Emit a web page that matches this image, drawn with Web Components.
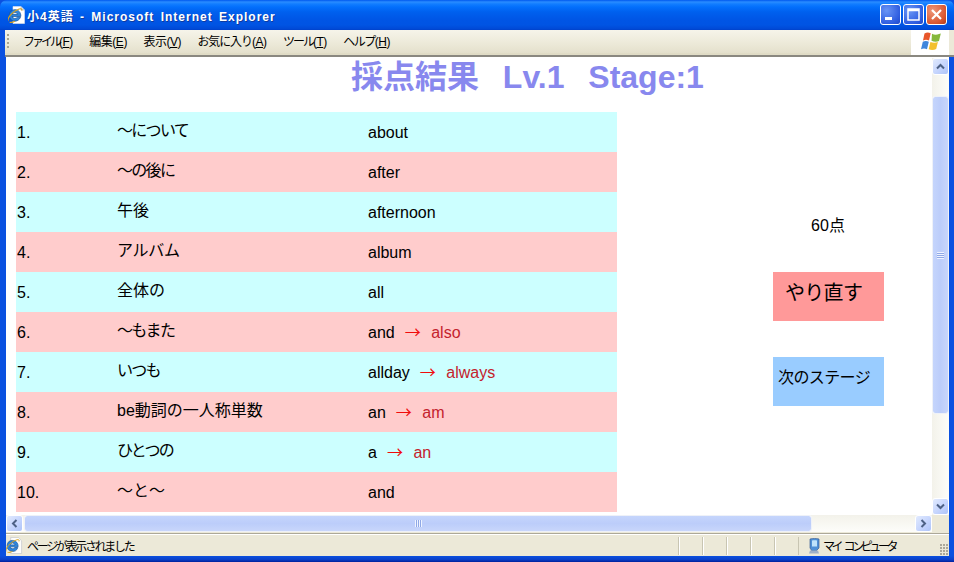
<!DOCTYPE html>
<html lang="ja"><head><meta charset="utf-8"><title>小4英語</title>
<style>
html,body{margin:0;height:100%;overflow:hidden;background:#0054e3}
body{font-family:"Liberation Sans","Noto Sans CJK JP",sans-serif}
.k{letter-spacing:-3px}
.k2{letter-spacing:-1.1px}
.k3{letter-spacing:-2px}
.k4{letter-spacing:-1.5px}
.k1{letter-spacing:-1.7px}
.ks{letter-spacing:-.6px}
.kt{letter-spacing:-2.3px}
.kz{letter-spacing:-3.4px}
</style></head><body>
<xp-window>
  <xp-titlebar slot="title">小4英語 - Microsoft Internet Explorer</xp-titlebar>
  <xp-menubar slot="menu">
    <xp-menu><span class="k">ファイル</span>(<u>F</u>)</xp-menu>
    <xp-menu>編集(<u>E</u>)</xp-menu>
    <xp-menu>表示(<u>V</u>)</xp-menu>
    <xp-menu><span class="k2">お気に入り</span>(<u>A</u>)</xp-menu>
    <xp-menu><span class="k3">ツール</span>(<u>T</u>)</xp-menu>
    <xp-menu><span class="k4">ヘルプ</span>(<u>H</u>)</xp-menu>
  </xp-menubar>
  <result-page slot="page">
    <span slot="heading">採点結果&nbsp;&nbsp;Lv.1&nbsp;&nbsp;Stage:1</span>
    <score-row slot="rows" n="1." tone="cyan"><span slot="jp" class="k1">〜について</span>about</score-row>
    <score-row slot="rows" n="2." tone="pink"><span slot="jp" class="k1">〜の後に</span>after</score-row>
    <score-row slot="rows" n="3." tone="cyan"><span slot="jp">午後</span>afternoon</score-row>
    <score-row slot="rows" n="4." tone="pink"><span slot="jp" style="letter-spacing:-.3px">アルバム</span>album</score-row>
    <score-row slot="rows" n="5." tone="cyan"><span slot="jp">全体の</span>all</score-row>
    <score-row slot="rows" n="6." tone="pink" fix="also"><span slot="jp" class="k1">〜もまた</span>and</score-row>
    <score-row slot="rows" n="7." tone="cyan" fix="always"><span slot="jp" class="k1">いつも</span>allday</score-row>
    <score-row slot="rows" n="8." tone="pink" fix="am"><span slot="jp">be動詞の一人称単数</span>an</score-row>
    <score-row slot="rows" n="9." tone="cyan" fix="an"><span slot="jp" class="k1">ひとつの</span>a</score-row>
    <score-row slot="rows" n="10." tone="pink"><span slot="jp">〜と〜</span>and</score-row>
    <span slot="score">60点</span>
    <action-box slot="actions" tone="red" size="20" pad="12" top="9"><span style="letter-spacing:-.7px">やり直す</span></action-box>
    <action-box slot="actions" tone="blue" size="16" pad="5" top="9"><span class="ks">次のステージ</span></action-box>
  </result-page>
  <xp-scrollbar slot="vbar" orient="v"></xp-scrollbar>
  <xp-scrollbar slot="hbar" orient="h"></xp-scrollbar>
  <xp-statusbar slot="status"><span class="kt">ページが表示されました</span><span slot="zone"><span class="kz">マイ</span> <span class="kz">コンピュータ</span></span></xp-statusbar>
</xp-window>
<script>
const def=(name,html,extra={})=>{
  const t=document.createElement('template');t.innerHTML=html;
  customElements.define(name,class extends HTMLElement{
    constructor(){super();this.attachShadow({mode:'open'}).appendChild(t.content.cloneNode(true));}
    connectedCallback(){extra.init&&extra.init(this);}
  });
};
const E=`<path d="M8 2.500a5.500 5.500 0 1 0 5.300 7.200h-3a2.800 2.800 0 0 1-5-.7h8.300C13.900 5.300 11.500 2.500 8 2.500zM5.400 7a2.700 2.700 0 0 1 5.200 0z" fill="#2e86dc" stroke="#14559f" stroke-width=".7"/><path d="M1.500 13.500C.5 11 5 4.500 12 2c2-.7 3-.2 2.500 1.500M3 14.500c1.500.4 3.500-.2 5-1" fill="none" stroke="#d9a21b" stroke-width="1"/>`;
const DOCIE=`<svg width="18" height="18" viewBox="0 0 18 18"><path d="M5 0.500h8l3.500 3.500v13.500H5z" fill="#fff" stroke="#dfe3ea" stroke-width=".6"/><path d="M13 .5v3.500h3.500" fill="#d8dde6" stroke="#9aa3b3" stroke-width=".5"/><g transform="translate(-1.500 1) scale(1.050)">${E}</g></svg>`;
const IE=`<svg width="17" height="17" viewBox="0 0 18 18"><path d="M5 .500h8l3.500 3.500v13.500H5z" fill="#fdfdfb" stroke="#b8bcc4" stroke-width=".6"/><g transform="translate(-1.500 1) scale(1.050)">${E}</g></svg>`;

def('xp-window',`<style>
:host{display:grid;height:562px;width:954px;box-sizing:border-box;grid-template-rows:30px 27px 1fr 17px 3px 21px 6px;grid-template-columns:6px 1fr 17px 5px;background:#0a50e0;overflow:hidden}
.t{grid-column:1/5;grid-row:1}
.m{grid-column:2/5;grid-row:2;margin-left:-1px}
.p{grid-column:2;grid-row:3;overflow:hidden;background:#fff;min-width:0;min-height:0}
.v{grid-column:3;grid-row:3;background:#fff;padding-top:1px}
.h{grid-column:2;grid-row:4}
.c{grid-column:3;grid-row:4;background:#ece9d8}
.l{grid-column:2/4;grid-row:5;background:linear-gradient(#ece9d8,#ece9d8 1px,#aca899 1px,#aca899 2px,#fff 2px)}
.s{grid-column:2/4;grid-row:6}
.b{grid-column:1/5;grid-row:7;background:linear-gradient(#0a50e0,#0a3fc8 60%,#00209c)}
</style>
<div class="t"><slot name="title"></slot></div>
<div class="m"><slot name="menu"></slot></div>
<div class="p"><slot name="page"></slot></div>
<div class="v"><slot name="vbar"></slot></div>
<div class="h"><slot name="hbar"></slot></div>
<div class="c"></div><div class="l"></div>
<div class="s"><slot name="status"></slot></div>
<div class="b"></div>`);

def('xp-titlebar',`<style>
:host{display:flex;align-items:center;height:30px;box-sizing:border-box;padding:1px 7px 0 8px;border-radius:7px 7px 0 0;
background:linear-gradient(#0058ee 0,#2a8cff 2px,#127dff 4px,#036ffc 7px,#0060ee 12px,#0055e5 20px,#0054e3 25px,#0049d6 29px,#0040c8 30px);
color:#fff;font:bold 12px "Liberation Sans","Noto Sans CJK JP",sans-serif;letter-spacing:1px;word-spacing:2px;text-shadow:1px 1px 0 #0f3a9e}
.txt{margin-left:1px;flex:1;white-space:pre}
.ic{display:flex;width:18px;height:18px;align-items:center;justify-content:center;box-sizing:border-box;margin-top:-2px}
.btns{display:flex;gap:2px;margin-top:-2px}
.btn{width:21px;height:21px;box-sizing:border-box;border:1px solid #fff;border-radius:3px;display:block}
.b{background:radial-gradient(circle at 30% 30%,#6a95f5,#2f5de0 70%,#2048c8)}
.x{background:radial-gradient(circle at 30% 30%,#ee9678,#d8552f 70%,#b03a18)}
</style>
<span class="ic">${DOCIE}</span><span class="txt"><slot></slot></span>
<div class="btns">
<svg class="btn b" viewBox="0 0 19 19"><rect x="4" y="12" width="7" height="3" fill="#fff"/></svg>
<svg class="btn b" viewBox="0 0 19 19"><path d="M4 4h11v11H4z M4 5.500h11" fill="none" stroke="#fff" stroke-width="1.500"/></svg>
<svg class="btn x" viewBox="0 0 19 19"><path d="M5 5l9 9M14 5l-9 9" stroke="#fff" stroke-width="2.200"/></svg>
</div>`);

def('xp-menubar',`<style>
:host{display:flex;height:27px;box-sizing:border-box;background:#ece9d8;border-bottom:2px solid #8a8880}
.bar{flex:1;display:flex;align-items:center;gap:16.500px;height:23px;padding:0 0 0 18px;background:linear-gradient(#f6f4ea,#ece9d8 60%,#e4e0cc);border-bottom:2px solid #e0dcc6;font:12px "Liberation Sans","Noto Sans CJK JP",sans-serif;letter-spacing:-.5px;color:#000}
.grip{width:2px;height:16px;margin-left:-16px;margin-right:-2.500px;background:repeating-linear-gradient(#a8a590 0 2px,transparent 2px 4px)}
.logo{width:38px;background:#fff;display:flex;justify-content:center;margin-right:5px;padding:2px 0 0 2px;box-sizing:border-box}
</style>
<div class="bar"><span class="grip"></span><slot></slot></div>
<div class="logo"><svg width="21" height="19" viewBox="0 0 21 19"><path d="M3.500 1.500c2.200-1.200 4-1.200 6.200-.2L8 8.500C6 7.500 4 7.500 2 8.500z" fill="#e8562a"/><path d="M11 1.800c2 1 4.500 1.300 7 .2l1.800-.4-1.800 7.400c-2.400 1-5 .9-7.500-.2z" fill="#86b83c"/><path d="M1.800 9.700c2-1 4-1 6 0L6 17.300c-2-1-4-1-6 0z" fill="#3f86dc"/><path d="M9.400 10c2.500 1 5 1.100 7.500 0l-1.700 7c-2.300 1.200-5 1.200-7.500.3z" fill="#f3c02d"/></svg></div>`);

def('xp-menu',`<style>:host{display:block;white-space:nowrap;line-height:16px}</style><slot></slot>`);

def('result-page',`<style>
:host{display:block;width:1046px;height:458px;background:#fff;color:#000;font:16px "Liberation Sans","Noto Sans CJK JP",sans-serif}
h1{margin:0;height:55px;box-sizing:border-box;text-align:center;font-size:32px;line-height:40px;color:#8888ee;font-weight:bold;white-space:nowrap;word-spacing:3px;padding-right:3px}
.body{display:flex;padding-left:10px}
.rows{display:flex;flex-direction:column;width:601px}
.side{margin-left:156px;width:111px;padding-top:102px;display:flex;flex-direction:column;align-items:center}
.score{line-height:24px;height:24px;margin-bottom:34px;margin-left:-1px}
.acts{display:flex;flex-direction:column;gap:36px;align-self:stretch}
</style>
<h1><slot name="heading"></slot></h1>
<div class="body">
<div class="rows"><slot name="rows"></slot></div>
<div class="side"><div class="score"><slot name="score"></slot></div><div class="acts"><slot name="actions"></slot></div></div>
</div>`);

def('score-row',`<style>
:host{display:grid;grid-template-columns:101px 251px 1fr;height:40px;line-height:40px;white-space:nowrap;background:#cff}
:host([tone=pink]){background:#fcc}
.n{padding-left:1px;padding-top:1px}
.jp{margin-top:-1px}
.ans{display:flex;padding-top:1px}
.fix{display:none;color:#c4222c}
:host([fix]) .fix{display:inline}
.arrow{color:#f00c0c;margin:0 10.500px 0 10px;font-family:"Noto Sans CJK JP",sans-serif;display:inline-block;height:40px;vertical-align:top;transform:translateY(-2px)}
</style>
<div class="n"></div><div class="jp"><slot name="jp"></slot></div>
<div class="ans"><span><slot></slot></span><span class="fix"><span class="arrow">→</span><span class="w"></span></span></div>`,
{init(e){const s=e.shadowRoot;s.querySelector('.n').textContent=e.getAttribute('n');s.querySelector('.w').textContent=e.getAttribute('fix')||'';}});

def('action-box',`<style>
:host{display:block;height:49px;box-sizing:border-box;background:#f99;white-space:nowrap;color:#000;line-height:24px}
:host([tone=blue]){background:#9cf}
</style><slot></slot>`,
{init(e){e.style.fontSize=e.getAttribute('size')+'px';e.style.paddingLeft=e.getAttribute('pad')+'px';e.style.paddingTop=e.getAttribute('top')+'px';}});

def('xp-scrollbar',`<style>
:host{display:flex;flex-direction:column;height:457px;width:17px;background:linear-gradient(90deg,#f3f2ea,#fdfdfa)}
:host([orient=h]){flex-direction:row;height:17px;width:926px;background:linear-gradient(#f3f2ea,#fdfdfa)}
.btn{flex:none;width:17px;height:17px;box-sizing:border-box;border:1px solid #fff;border-radius:3px;background:linear-gradient(135deg,#e1eafe,#c3d3fd 60%,#aec4f8);display:flex;align-items:center;justify-content:center}
.sp1{flex:none;height:21px;width:100%}
.sp2{flex:1}
.th{flex:none;height:318px;width:17px;box-sizing:border-box;border:1px solid #fff;border-radius:3px;background:linear-gradient(90deg,#c5d5fc,#bccdfa 50%,#c8d6fb);display:flex;align-items:center;justify-content:center;outline:1px solid #eef1f8;outline-offset:-1px}
:host([orient=h]) .sp1{width:1px;height:auto}
:host([orient=h]) .th{height:17px;width:788px;background:linear-gradient(#c5d5fc,#bccdfa 50%,#c8d6fb)}
.g{width:7px;height:7px;background:repeating-linear-gradient(#eef3ff 0 1px,#8fa8e6 1px 2px)}
:host([orient=h]) .g{background:repeating-linear-gradient(90deg,#eef3ff 0 1px,#8fa8e6 1px 2px)}
svg{display:block}
</style>
<div class="btn"><svg class="a" width="9" height="7" viewBox="0 0 9 7"><path fill="none" stroke="#4d6185" stroke-width="2" d="M1 5.500l3.500-3.500 3.500 3.500"/></svg></div>
<div class="sp1"></div><div class="th"><div class="g"></div></div><div class="sp2"></div>
<div class="btn"><svg class="z" width="9" height="7" viewBox="0 0 9 7"><path fill="none" stroke="#4d6185" stroke-width="2" d="M1 1.500l3.500 3.500 3.500-3.500"/></svg></div>`,
{init(e){if(e.getAttribute('orient')==='h'){const s=e.shadowRoot;
s.querySelector('.a').style.transform='rotate(-90deg)';s.querySelector('.z').style.transform='rotate(-90deg)';}}});

def('xp-statusbar',`<style>
:host{display:flex;align-items:center;height:21px;background:#ece9d8;font:12px "Liberation Sans","Noto Sans CJK JP",sans-serif;color:#000;white-space:nowrap}
.main{flex:1;display:flex;align-items:center;gap:4px}
.p{width:23px;height:18px;border-left:1px solid #c8c5b2;box-shadow:1px 0 0 #fff inset}
.zone{width:142px;height:18px;display:flex;align-items:center;gap:2px;padding-left:8px;box-sizing:border-box;border-left:1px solid #c8c5b2}
svg{display:block;flex:none}
.grip{flex:none;width:9px;height:12px;align-self:flex-end;background:radial-gradient(circle at 1px 1px,#aca899 1px,transparent 1.2px) 0 0/3px 3px}
</style>
<div class="main">${IE}<slot></slot></div>
<div class="p"></div><div class="p"></div><div class="p"></div><div class="p"></div><div class="p"></div>
<div class="zone"><svg width="14" height="16" viewBox="0 0 14 16"><path d="M3 1c3-.8 6-.8 9 0v9l-3 3H5l-2-3z" fill="#4f90d6" stroke="#3a5f96" stroke-width=".7"/><path d="M5 2.500c2-.4 3.500-.4 5 0v6H5z" fill="#bfe3fb"/><path d="M3 12.500h8l1 3H2z" fill="#9fb0c8"/></svg><slot name="zone"></slot></div>
<div class="grip"></div>`);
</script>
</body></html>
